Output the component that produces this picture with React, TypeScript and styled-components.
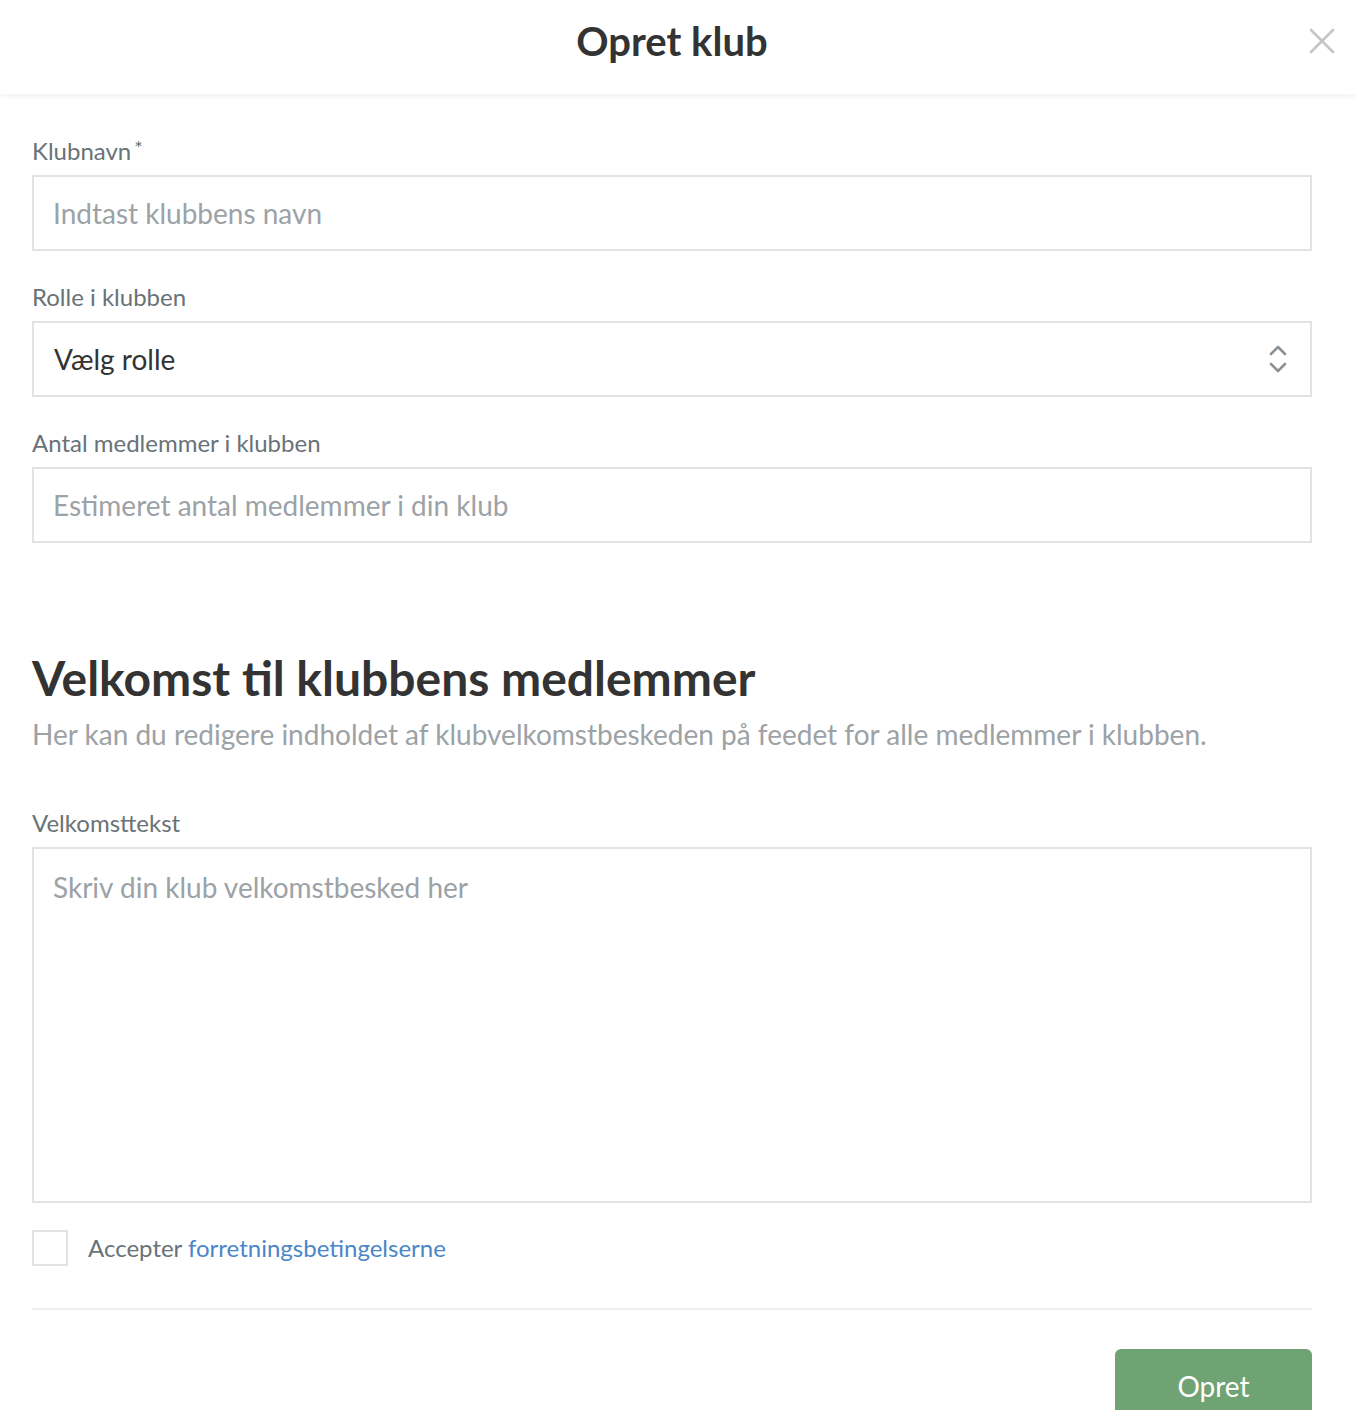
import React, { useState } from 'react';
import styled, { createGlobalStyle } from 'styled-components';

const GlobalStyle = createGlobalStyle`
  html, body {
    margin: 0;
    padding: 0;
    background: #ffffff;
    font-family: Lato, "Open Sans", "Liberation Sans", sans-serif;
  }
  * {
    box-sizing: border-box;
  }
`;

const App = () => {
  const [accepted, setAccepted] = useState(false);

  return (
    <>
      <GlobalStyle />
      <Page>
        <Header>
          <Title>Opret klub</Title>
          <CloseButton aria-label="Luk">
            <svg width="26" height="26" viewBox="0 0 26 26">
              <path d="M2 2 L24 24 M24 2 L2 24" stroke="#c3c5c7" strokeWidth="2.6" strokeLinecap="round" />
            </svg>
          </CloseButton>
        </Header>

        <Content>
          <Fields>
            <Field>
              <Label>
                Klubnavn<Required>*</Required>
              </Label>
              <Input placeholder="Indtast klubbens navn" />
            </Field>

            <Field>
              <Label>Rolle i klubben</Label>
              <SelectBox>
                <SelectValue>Vælg rolle</SelectValue>
                <svg width="20" height="32" viewBox="0 0 20 32">
                  <path d="M3 11 L10 4 L17 11" fill="none" stroke="#8a9297" strokeWidth="2.6" strokeLinecap="round" strokeLinejoin="round" />
                  <path d="M3 21 L10 28 L17 21" fill="none" stroke="#8a9297" strokeWidth="2.6" strokeLinecap="round" strokeLinejoin="round" />
                </svg>
              </SelectBox>
            </Field>

            <Field>
              <Label>Antal medlemmer i klubben</Label>
              <Input placeholder="Estimeret antal medlemmer i din klub" />
            </Field>
          </Fields>

          <SectionTitle>Velkomst til klubbens medlemmer</SectionTitle>
          <SectionText>
            Her kan du redigere indholdet af klubvelkomstbeskeden på feedet for alle medlemmer i klubben.
          </SectionText>

          <WelcomeField>
            <Label>Velkomsttekst</Label>
            <TextArea placeholder="Skriv din klub velkomstbesked her" />
          </WelcomeField>

          <TermsRow>
            <Checkbox
              type="checkbox"
              checked={accepted}
              onChange={() => setAccepted(!accepted)}
            />
            <TermsText>
              Accepter <TermsLink href="#">forretningsbetingelserne</TermsLink>
            </TermsText>
          </TermsRow>

          <Divider />

          <Footer>
            <SubmitButton>Opret</SubmitButton>
          </Footer>
        </Content>
      </Page>
    </>
  );
};

const Page = styled.div`
  width: 100%;
  min-height: 100vh;
  background: #ffffff;
`;

const Header = styled.header`
  position: relative;
  height: 94px;
  display: flex;
  align-items: center;
  justify-content: center;
  background: #ffffff;
  box-shadow: 0 2px 6px rgba(0, 0, 0, 0.06);
`;

const Title = styled.h1`
  margin: 0 12px 0 0;
  font-size: 40px;
  font-weight: 700;
  color: #333333;
  padding-bottom: 12px;
`;

const CloseButton = styled.button`
  position: absolute;
  right: 21px;
  top: 28px;
  padding: 0;
  border: none;
  background: none;
  cursor: pointer;
  display: flex;
`;

const Content = styled.main`
  padding: 43px 44px 0 32px;
`;

const Fields = styled.div`
  display: flex;
  flex-direction: column;
  gap: 32px;
`;

const Field = styled.div`
  display: flex;
  flex-direction: column;
  gap: 10px;
`;

const Label = styled.label`
  font-size: 24px;
  line-height: 28px;
  color: #697277;
`;

const Required = styled.span`
  margin-left: 3px;
  font-size: 20px;
  line-height: 20px;
  vertical-align: top;
`;

const Input = styled.input`
  height: 76px;
  width: 100%;
  padding: 0 19px;
  border: 2px solid #e1e2e6;
  border-radius: 0;
  font-family: inherit;
  font-size: 28px;
  color: #333333;
  outline: none;

  &::placeholder {
    color: #9ca2a6;
  }
`;

const SelectBox = styled.div`
  height: 76px;
  display: flex;
  align-items: center;
  justify-content: space-between;
  padding: 0 22px 0 20px;
  border: 2px solid #e1e2e6;
  cursor: pointer;
`;

const SelectValue = styled.span`
  font-size: 28px;
  color: #333333;
`;

const SectionTitle = styled.h2`
  margin: 106px 0 0;
  font-size: 48px;
  line-height: 58px;
  font-weight: 700;
  color: #333333;
`;

const SectionText = styled.p`
  margin: 10px 0 0;
  font-size: 28px;
  line-height: 34px;
  color: #9ca2a6;
`;

const WelcomeField = styled(Field)`
  margin-top: 58px;
`;

const TextArea = styled.textarea`
  height: 356px;
  width: 100%;
  padding: 20px 19px;
  border: 2px solid #e1e2e6;
  border-radius: 0;
  resize: none;
  font-family: inherit;
  font-size: 28px;
  line-height: 36px;
  color: #333333;
  outline: none;

  &::placeholder {
    color: #9ca2a6;
  }
`;

const TermsRow = styled.div`
  display: flex;
  align-items: center;
  gap: 20px;
  margin-top: 27px;
`;

const Checkbox = styled.input`
  appearance: none;
  margin: 0;
  width: 36px;
  height: 36px;
  border: 2px solid #e1e2e6;
  background: #ffffff;
  cursor: pointer;

  &:checked {
    background: #6fa373;
    border-color: #6fa373;
  }
`;

const TermsText = styled.span`
  font-size: 24px;
  line-height: 30px;
  color: #697277;
`;

const TermsLink = styled.a`
  color: #4a86c8;
  text-decoration: none;
`;

const Divider = styled.hr`
  margin: 42px 0 0;
  border: none;
  border-top: 2px solid #eeeef2;
`;

const Footer = styled.div`
  display: flex;
  justify-content: flex-end;
  margin-top: 39px;
`;

const SubmitButton = styled.button`
  width: 197px;
  height: 76px;
  border: none;
  border-radius: 6px;
  background: #6fa373;
  color: #ffffff;
  font-family: inherit;
  font-size: 28px;
  padding-bottom: 4px;
  cursor: pointer;
`;

export default App;
